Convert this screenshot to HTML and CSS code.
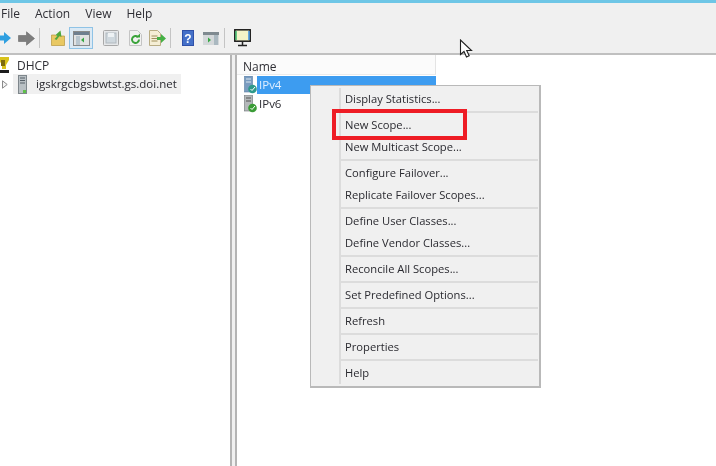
FILE: index.html
```html
<!DOCTYPE html>
<html lang="en">
<head>
<meta charset="utf-8">
<title>DHCP</title>
<link rel="stylesheet" href="styles.css">
</head>
<body>
<div class="app">
  <div class="titlebar"></div>
  <nav class="menubar">
    <span>File</span><span>Action</span><span>View</span><span>Help</span>
  </nav>
  <div class="toolbar">
    <svg class="tb tb-back" width="11" height="14" viewBox="0 0 11 14"><path d="M-2 4.500h6V1l7 6-7 6V9.500h-6z" fill="#2f9fe0"/></svg>
    <svg class="tb tb-fwd" width="17" height="15" viewBox="0 0 17 15"><path d="M.5 4.500h8V.8L16.500 7.500 8.500 14.200V10.500h-8z" fill="#7d7d7d" stroke="#6a6a6a" stroke-width=".6"/></svg>
    <i class="sep"></i>
    <svg class="tb" width="14" height="16" viewBox="0 0 14 16"><path d="M.5 5h4l1 1h8v9.500h-13z" fill="#e9c862" stroke="#b8963c" stroke-width=".7"/><path d="M3.500 9l3-3-2-1 5-4.500 1 6.500-2-1-3 4z" fill="#4fa83c"/></svg>
    <span class="tb-active"><svg width="17" height="15" viewBox="0 0 17 15"><rect x=".5" y=".5" width="16" height="14" fill="#e2e2e2" stroke="#8a8a8a"/><rect x="1" y="1" width="15" height="3" fill="#6f7f8f"/><rect x="3" y="5" width="4" height="9" fill="#b9c6cf"/><path d="M11 6.500v5L8 9z" fill="#39a845"/></svg></span>
    <svg class="tb tb-10" width="16" height="16" viewBox="0 0 16 16"><rect x=".5" y=".5" width="15" height="15" rx="1" fill="#e6e8ea" stroke="#a8a8a8"/><rect x="3" y="3" width="10" height="10" fill="#cfd8de" stroke="#b0b8be"/><path d="M5 3h6v4H5z" fill="#eef2f4"/></svg>
    <svg class="tb tb-10" width="13" height="16" viewBox="0 0 13 16"><path d="M.5.500h8l4 4v11H.5z" fill="#f1f1f1" stroke="#c4c4c4"/><path d="M10 9.500a3.500 3.500 0 1 1-1-2.500" fill="none" stroke="#3aa33a" stroke-width="2"/><path d="M7 7.500h4v-4z" fill="#3aa33a"/></svg>
    <svg class="tb tb-7" width="17" height="16" viewBox="0 0 17 16"><path d="M.5.500h8l3 3v12h-11z" fill="#f5eed5" stroke="#b9ad85"/><path d="M2.500 6h6M2.500 8.500h6M2.500 11h6" stroke="#a08f5a"/><path d="M8 7h4V4l5 4.500-5 4.500v-3H8z" fill="#45b045"/></svg>
    <i class="sep"></i>
    <svg class="tb" width="12" height="16" viewBox="0 0 12 16"><rect width="12" height="16" fill="#2f50a8"/><rect x="1" y="1" width="10" height="14" fill="#4470c8"/><text x="6" y="12.500" class="q">?</text></svg>
    <svg class="tb tb-9" width="16" height="13" viewBox="0 0 16 13"><rect width="16" height="13" fill="#d4d8da"/><rect width="16" height="3" fill="#7f8a90"/><rect x="11" y="3" width="4" height="10" fill="#aab8c0"/><path d="M5 5.500v5L8 8z" fill="#3aa845"/></svg>
    <i class="sep sep-tight"></i>
    <svg class="tb" width="17" height="18" viewBox="0 0 17 18"><rect x=".8" y=".8" width="15.400" height="11.400" fill="#f4f4c8" stroke="#1a1a1a" stroke-width="1.500"/><path d="M2 2v9" stroke="#38b56a" stroke-width="1.500"/><path d="M15 2v9" stroke="#3a8ee0" stroke-width="1.500"/><path d="M8.500 13v3M4 16.500h9" stroke="#222" stroke-width="1.500"/></svg>
  </div>
  <div class="panes">
    <aside class="tree">
      <div class="row-dhcp">
        <svg width="9" height="16" viewBox="2 0 9 16"><path d="M1 0h10v3l-3 5v4H4V8L1 3z" fill="#d8c21c"/><path d="M3 3h4v6H3z" fill="#7d6a10"/><rect x="0" y="13" width="11" height="3" fill="#1d1d1d"/></svg>
        <span>DHCP</span>
      </div>
      <div class="row-server">
        <svg class="twisty" width="6" height="9" viewBox="0 0 6 9"><path d="M.5.800v7.400L5.200 4.500z" fill="#f4f4f4" stroke="#8a8a8a"/></svg>
        <div class="server-sel">
          <svg width="9" height="19" viewBox="0 0 9 19"><rect x=".5" y=".5" width="8" height="18" fill="#b9c0c4" stroke="#7f878c"/><path d="M2 3h5M2 5.500h5M2 8h5" stroke="#566068"/><rect x="5" y="15" width="3" height="3" fill="#5fc04a"/></svg>
          <span class="server-name">igskrgcbgsbwtst.gs.doi.net</span>
        </div>
      </div>
    </aside>
    <main class="list">
      <header class="list-head"><span>Name</span></header>
      <div class="list-row">
        <svg width="13" height="18" viewBox="0 0 13 18"><rect x=".5" y="0" width="8" height="16" fill="#7a9cc0" stroke="#5b7fa3" stroke-width=".6"/><path d="M2 3h5M2 6h5" stroke="#dbe6ee"/><circle cx="8.500" cy="13" r="4.300" fill="#2f9a8a"/><path d="M6.500 13l1.500 1.500L11 11" stroke="#fff" fill="none"/></svg>
        <span class="sel-label">IPv4</span>
      </div>
      <div class="list-row">
        <svg width="13" height="18" viewBox="0 0 13 18"><rect x=".5" y="0" width="8" height="16" fill="#b4b8ba" stroke="#6c7276" stroke-width=".6"/><path d="M2 3h5M2 6h5" stroke="#555"/><circle cx="8.500" cy="13" r="4.300" fill="#3a9c36"/><path d="M6.500 13l1.500 1.500L11 11" stroke="#fff" fill="none"/></svg>
        <span class="plain-label">IPv6</span>
      </div>
    </main>
  </div>
  <ul class="menu">
    <li>Display Statistics...</li>
    <li class="div"></li>
    <li>New Scope...</li>
    <li>New Multicast Scope...</li>
    <li class="div"></li>
    <li>Configure Failover...</li>
    <li>Replicate Failover Scopes...</li>
    <li class="div"></li>
    <li>Define User Classes...</li>
    <li>Define Vendor Classes...</li>
    <li class="div"></li>
    <li>Reconcile All Scopes...</li>
    <li class="div"></li>
    <li>Set Predefined Options...</li>
    <li class="div"></li>
    <li>Refresh</li>
    <li class="div"></li>
    <li>Properties</li>
    <li class="div"></li>
    <li>Help</li>
  </ul>
  <div class="highlight"></div>
  <svg class="cursor" width="15" height="20" viewBox="0 0 15 20"><path d="M1.500 1v14.500l3.500-3 2.500 5.500 2.700-1.200-2.500-5.300h4.800z" fill="#fff" stroke="#222" stroke-width="1.100"/></svg>
</div>
</body>
</html>
```
FILE: styles.css
```css
* { box-sizing: border-box; }
html, body { margin: 0; padding: 0; background: #fff; }
body { width: 716px; height: 466px; overflow: hidden; }
.app {
  position: relative;
  width: 716px;
  height: 466px;
  display: flex;
  flex-direction: column;
  overflow: hidden;
  font-family: "Open Sans", "Noto Sans", sans-serif;
  font-size: 11.500px;
  color: #2a2a30;
  filter: blur(0.45px);
}
.titlebar { height: 3px; background: #6ec6e6; flex: none; }
.menubar {
  height: 21px;
  flex: none;
  background: #f0f0f0;
  display: flex;
  align-items: center;
  gap: 15px;
  padding-left: 1px;
  font-size: 12px;
  color: #2f2f35;
}
.toolbar {
  height: 29px;
  flex: none;
  background: #f0f0f0;
  display: flex;
  align-items: center;
  padding-bottom: 1px;
}
.tb { flex: none; display: block; }
.tb-fwd { margin-left: 7px; }
.tb-10 { margin-left: 10px; }
.tb-7 { margin-left: 7px; }
.tb-9 { margin-left: 9px; }
.sep { width: 1px; height: 20px; background: #c4c4c4; margin: 0 11px 0 4px; flex: none; }
.sep-tight { margin: 0 9px 0 5px; }
.tb-active {
  width: 24px;
  height: 22px;
  margin-left: 4px;
  background: #dbe9f4;
  border: 1px solid #8fc3e6;
  display: flex;
  align-items: center;
  justify-content: center;
  flex: none;
}
.q { font: 700 12px "Liberation Sans", sans-serif; fill: #fff; text-anchor: middle; }
.panes {
  flex: 1;
  display: flex;
  border-top: 2px solid #c0c0c0;
  background: #f0f0f0;
}
.tree {
  width: 232px;
  flex: none;
  background: #fff;
  border-right: 2px solid #b4b4b4;
  padding-top: 1px;
}
.row-dhcp {
  height: 18px;
  display: flex;
  align-items: center;
  gap: 8px;
  font-size: 12px;
  color: #2f2f35;
}
.row-server { display: flex; align-items: center; height: 20px; }
.twisty { margin-left: 2px; flex: none; }
.server-sel {
  margin-left: 5px;
  width: 168px;
  height: 20px;
  background: #f0f0f0;
  display: flex;
  align-items: center;
  gap: 9px;
  padding-left: 5px;
  white-space: nowrap;
}
.server-name { padding-bottom: 2px; }
.list {
  flex: 1;
  margin-left: 3px;
  background: #fff;
  border-left: 2px solid #b4b4b4;
}
.list-head {
  width: 199px;
  height: 20px;
  padding: 3px 0 0 6px;
  background: #fbfbfb;
  border-right: 1px solid #e4e4e4;
  border-bottom: 1px solid #ebebeb;
  display: flex;
  align-items: center;
  font-size: 12px;
  color: #2f2f35;
}
.list-row {
  height: 19px;
  display: flex;
  align-items: center;
  padding-left: 7px;
  white-space: nowrap;
}
.sel-label {
  width: 179px;
  height: 18px;
  line-height: 18px;
  background: #3d9cf0;
  color: #dfeeff;
  padding-left: 2px;
}
.plain-label { padding-left: 2px; }
.menu {
  position: absolute;
  left: 310px;
  top: 85px;
  width: 231px;
  height: 303px;
  margin: 0;
  padding: 2px 1px 2px 30px;
  list-style: none;
  background: #f0f0f0;
  border: 1px solid #b9b9b9;
  border-width: 1px 2px 2px 1px;
  font-size: 11.200px;
  color: #2a2a30;
}
.menu::before {
  content: "";
  position: absolute;
  left: 28px;
  top: 2px;
  bottom: 2px;
  width: 2px;
  background: #dcdcdc;
}
.menu li { height: 22px; line-height: 22px; padding-left: 4px; white-space: nowrap; }
.menu li.div { height: 2px; background: #dcdcdc; margin: 1px 0; padding: 0; }
.highlight {
  position: absolute;
  left: 332px;
  top: 109px;
  width: 135px;
  height: 31px;
  border: 4px solid #ee1c25;
}
.cursor { position: absolute; left: 459px; top: 39px; }
```
